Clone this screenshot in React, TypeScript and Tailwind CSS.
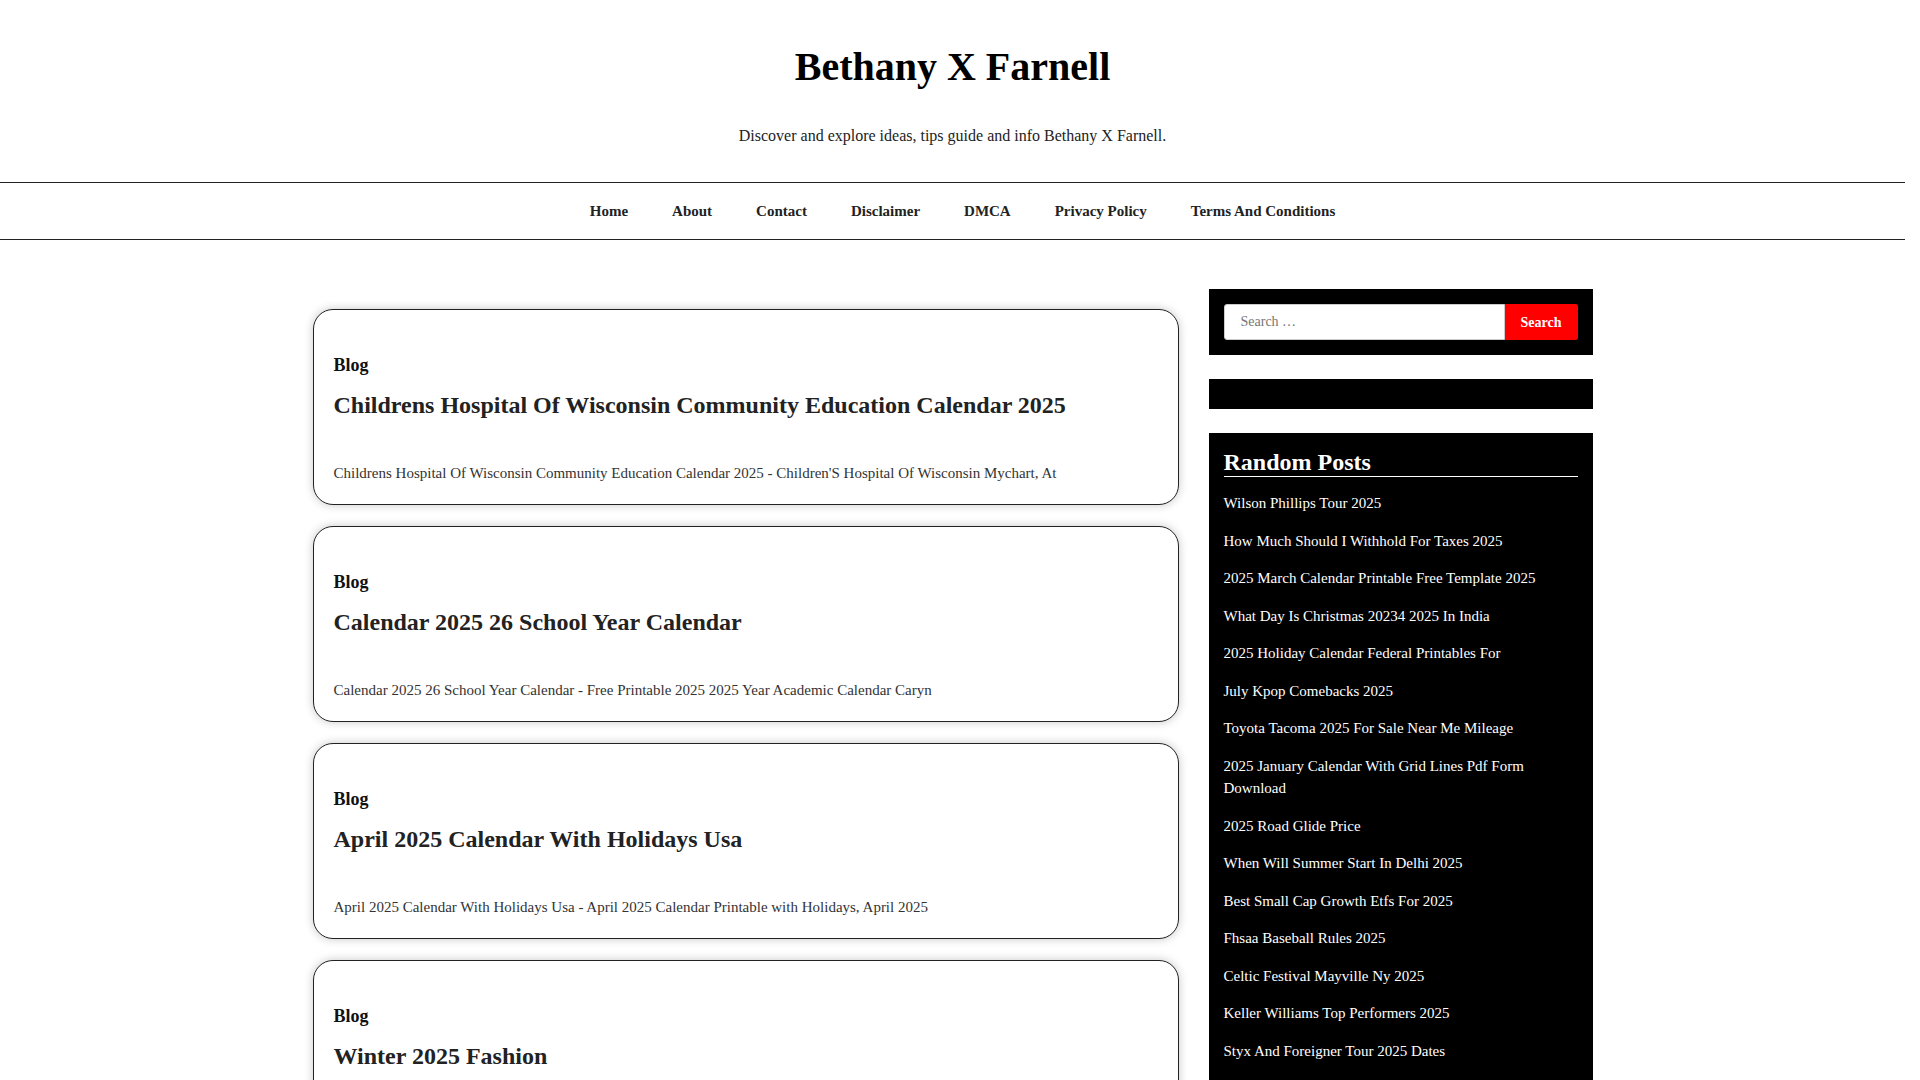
const navItems = [
  "Home",
  "About",
  "Contact",
  "Disclaimer",
  "DMCA",
  "Privacy Policy",
  "Terms And Conditions",
];

const posts = [
  {
    title: "Childrens Hospital Of Wisconsin Community Education Calendar 2025",
    excerpt:
      "Childrens Hospital Of Wisconsin Community Education Calendar 2025 - Children'S Hospital Of Wisconsin Mychart, At",
  },
  {
    title: "Calendar 2025 26 School Year Calendar",
    excerpt:
      "Calendar 2025 26 School Year Calendar - Free Printable 2025 2025 Year Academic Calendar Caryn",
  },
  {
    title: "April 2025 Calendar With Holidays Usa",
    excerpt:
      "April 2025 Calendar With Holidays Usa - April 2025 Calendar Printable with Holidays, April 2025",
  },
  {
    title: "Winter 2025 Fashion",
    excerpt: "Winter 2025 Fashion - Winter Fashion Trends 2025 Fashion Trends Winter",
  },
];

const randomPosts = [
  "Wilson Phillips Tour 2025",
  "How Much Should I Withhold For Taxes 2025",
  "2025 March Calendar Printable Free Template 2025",
  "What Day Is Christmas 20234 2025 In India",
  "2025 Holiday Calendar Federal Printables For",
  "July Kpop Comebacks 2025",
  "Toyota Tacoma 2025 For Sale Near Me Mileage",
  "2025 January Calendar With Grid Lines Pdf Form Download",
  "2025 Road Glide Price",
  "When Will Summer Start In Delhi 2025",
  "Best Small Cap Growth Etfs For 2025",
  "Fhsaa Baseball Rules 2025",
  "Celtic Festival Mayville Ny 2025",
  "Keller Williams Top Performers 2025",
  "Styx And Foreigner Tour 2025 Dates",
  "Lsu Football Schedule 2025",
  "Nfl Draft 2025 Order",
];

function PostCard({ title, excerpt }: { title: string; excerpt: string }) {
  return (
    <article className="rounded-[20px] border border-[#222] bg-white px-[20px] pt-[42px] pb-[20px] shadow-[0_0_10px_rgba(0,0,0,0.22)]">
      <a href="#" className="block text-[18px] font-bold leading-[27px] text-[#111]">
        Blog
      </a>
      <h2 className="mt-[11px] text-[24px] font-bold leading-[31px] text-[#222]">
        <a href="#">{title}</a>
      </h2>
      <p className="mt-[41px] text-[15px] leading-[22px] text-[#333]">{excerpt}</p>
    </article>
  );
}

export default function App() {
  return (
    <div className="min-h-screen bg-white pr-[15px] font-['Liberation_Serif','Times_New_Roman',serif] text-[#111]">
      <header className="pt-[43px] pb-[34px] text-center">
        <h1 className="text-[40px] font-bold leading-[48px] text-black">
          <a href="#">Bethany X Farnell</a>
        </h1>
        <p className="mt-[33px] text-[16px] leading-[24px] text-[#222]">
          Discover and explore ideas, tips guide and info Bethany X Farnell.
        </p>
      </header>

      <nav className="border-y border-[#222]">
        <ul className="flex h-[56px] items-center justify-center gap-[44px] pl-[20px]">
          {navItems.map((item) => (
            <li key={item}>
              <a href="#" className="text-[15px] font-bold text-[#222]">
                {item}
              </a>
            </li>
          ))}
        </ul>
      </nav>

      <div className="mx-auto flex w-[1280px] justify-between pt-[49px]">
        <main className="mt-[20px] flex w-[866px] flex-col gap-[21px]">
          {posts.map((p) => (
            <PostCard key={p.title} title={p.title} excerpt={p.excerpt} />
          ))}
        </main>

        <aside className="flex w-[384px] flex-col gap-[24px]">
          <section className="bg-black p-[15px]">
            <form className="flex" onSubmit={(e) => e.preventDefault()}>
              <input
                type="search"
                placeholder="Search …"
                className="h-[36px] flex-1 rounded-l-[3px] border border-[#ccc] bg-white px-[16px] text-[14px] text-[#333] placeholder:text-[#757575] outline-none"
              />
              <button
                type="submit"
                className="h-[36px] w-[73px] rounded-r-[3px] bg-[#ff0000] text-[14px] font-bold text-white"
              >
                Search
              </button>
            </form>
          </section>

          <section className="h-[30px] bg-black" />

          <section className="bg-black p-[15px] text-white">
            <h2 className="border-b border-white text-[24px] font-bold leading-[28px]">
              Random Posts
            </h2>
            <ul className="mt-[15px] flex flex-col gap-[15px]">
              {randomPosts.map((item) => (
                <li key={item} className="text-[15px] leading-[22.5px]">
                  <a href="#">{item}</a>
                </li>
              ))}
            </ul>
          </section>
        </aside>
      </div>
    </div>
  );
}
